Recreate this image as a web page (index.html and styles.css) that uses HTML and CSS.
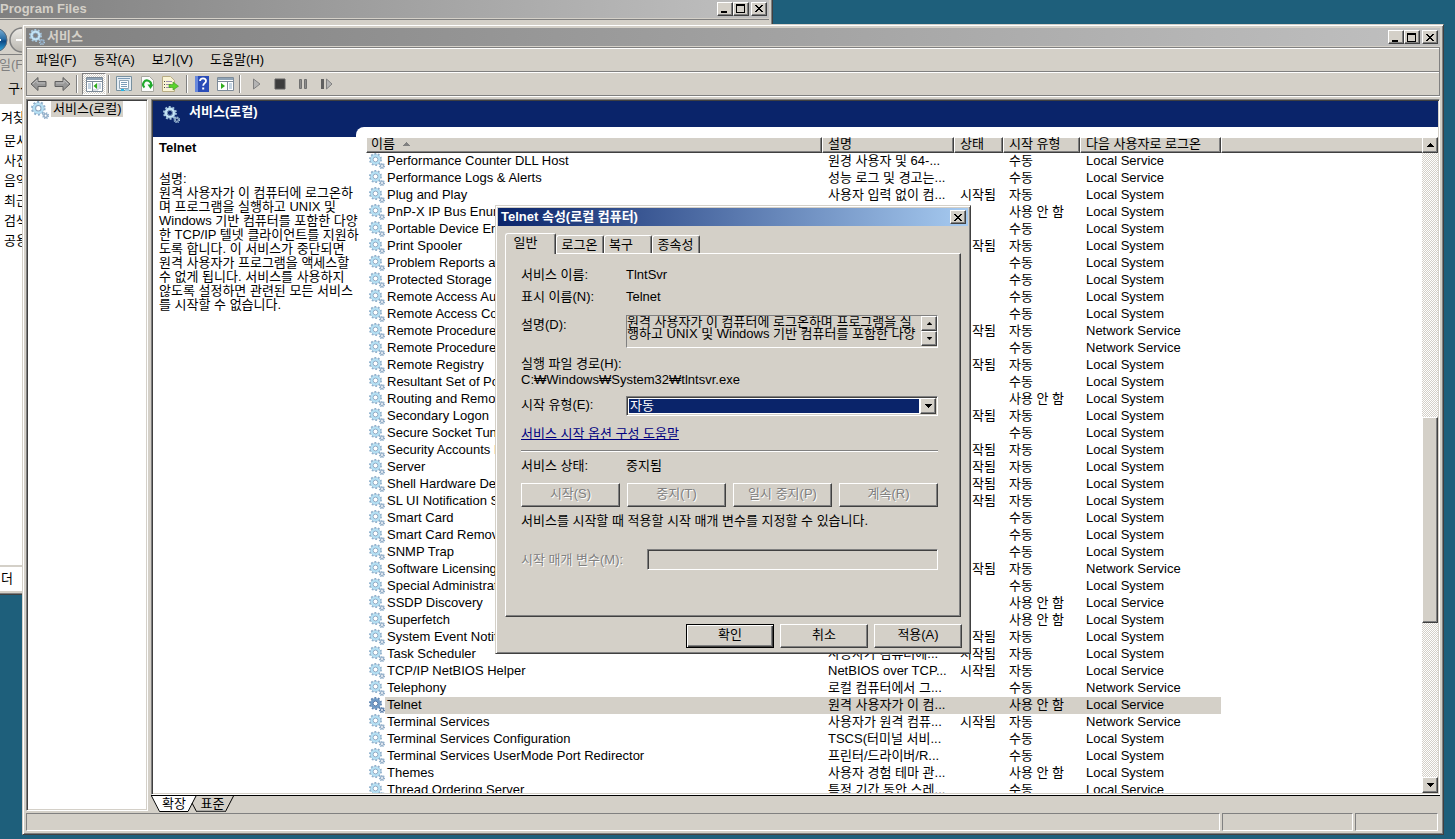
FILE: index.html
```html
<!DOCTYPE html>
<html lang="ko">
<head>
<meta charset="utf-8">
<title>서비스</title>
<link rel="stylesheet" href="styles.css">
</head>
<body>
<svg class="sprite" aria-hidden="true">
  <symbol id="gear" viewBox="0 0 16 16">
    <circle cx="6.5" cy="6.5" r="5.6" fill="none" stroke="var(--tooth, #8fb0cc)" stroke-width="1.8" stroke-dasharray="1.8 1.72"/>
    <circle cx="6.5" cy="6.5" r="4.9" fill="none" stroke="var(--tooth, #8fb0cc)" stroke-width="0.8"/>
    <circle cx="6.5" cy="6.5" r="3.7" fill="none" stroke="var(--ring, #b4e0f4)" stroke-width="2.2"/>
    <circle cx="6.5" cy="6.5" r="2.4" fill="none" stroke="var(--rim, #86a0bc)" stroke-width="0.9"/>
    <circle cx="13" cy="13" r="2.4" fill="none" stroke="var(--tooth, #8fb0cc)" stroke-width="1.4" stroke-dasharray="1.1 0.8"/>
    <circle cx="13" cy="13" r="1.5" fill="none" stroke="var(--small, #90aac4)" stroke-width="1.2"/>
  </symbol>
  <symbol id="up" viewBox="0 0 7 4"><path d="M3 0h1v1h1v1h1v1h1v1H0V3h1V2h1V1h1z"/></symbol>
  <symbol id="down" viewBox="0 0 7 4"><path d="M0 0h7v1H6v1H5v1H4v1H3V3H2V2H1V1H0z"/></symbol>
  <symbol id="min" viewBox="0 0 10 9"><path d="M1 7h6v2H1z"/></symbol>
  <symbol id="max" viewBox="0 0 10 9"><path d="M0 0h9v9H0zM1 2v6h7V2z" fill-rule="evenodd"/></symbol>
  <symbol id="close" viewBox="0 0 8 7"><path d="M0 0h2v1h1v1h2V1h1V0h2v1H7v1H6v1H5v1h1v1h1v1h1v1H6V6H5V5H3v1H2v1H0V6h1V5h1V4h1V3H2V2H1V1H0z"/></symbol>
</svg>

<section class="window explorer">
  <header class="titlebar inactive">
    <span class="caption">Program Files</span>
    <span class="controls">
      <button class="cap" aria-label="최소화"><svg width="10" height="9"><use href="#min"/></svg></button>
      <button class="cap" aria-label="최대화"><svg width="10" height="9"><use href="#max"/></svg></button>
      <button class="cap apart" aria-label="닫기"><svg width="8" height="7"><use href="#close"/></svg></button>
    </span>
  </header>
  <div class="explorer-nav">
    <svg width="34" height="28" viewBox="0 0 34 28">
      <defs>
        <linearGradient id="orb" x1="0" y1="0" x2="0" y2="1"><stop offset="0" stop-color="#7fb4d8"/><stop offset=".45" stop-color="#2a6ea6"/><stop offset=".55" stop-color="#0c4a86"/><stop offset="1" stop-color="#36b2e6"/></linearGradient>
        <linearGradient id="orb2" x1="0" y1="0" x2="0" y2="1"><stop offset="0" stop-color="#eceae6"/><stop offset="1" stop-color="#b8b5ae"/></linearGradient>
      </defs>
      <circle cx="-4" cy="14" r="12" fill="url(#orb)" stroke="#5b6b7b"/>
      <circle cx="23" cy="14" r="12" fill="url(#orb2)" stroke="#808080" stroke-width="1.5"/>
      <path d="M0 13h2v2H0z" fill="#fff"/><path d="M17 13h8v2h-8z" fill="#fff"/>
    </svg>
  </div>
  <div class="explorer-menu">일(F)</div>
  <div class="explorer-bar">구성</div>
  <div class="explorer-side">
    <b>겨찾기</b>
    <a href="#">문서</a><a href="#">사진</a><a href="#">음악</a><a href="#">최근</a><a href="#">검색</a><a href="#">공용</a>
  </div>
  <div class="explorer-status">더</div>
</section>

<main class="window services">
  <header class="titlebar inactive">
    <svg class="title-icon" width="16" height="16"><use href="#gear"/></svg>
    <span class="caption">서비스</span>
    <span class="controls">
      <button class="cap" aria-label="최소화"><svg width="10" height="9"><use href="#min"/></svg></button>
      <button class="cap" aria-label="최대화"><svg width="10" height="9"><use href="#max"/></svg></button>
      <button class="cap apart" aria-label="닫기"><svg width="8" height="7"><use href="#close"/></svg></button>
    </span>
  </header>

  <div class="bars">
    <nav class="menubar">
      <button>파일(F)</button><button>동작(A)</button><button>보기(V)</button><button>도움말(H)</button>
    </nav>
    <div class="toolbar">
      <button aria-label="뒤로"><svg width="18" height="16" viewBox="0 0 18 16"><path d="M1 8l7-6.500v4h8v5H8v4z" fill="#989898" stroke="#606060"/><path d="M3 8l4-4v3h8" fill="none" stroke="#bcbcbc"/></svg></button>
      <button aria-label="앞으로"><svg width="18" height="16" viewBox="0 0 18 16"><path d="M17 8l-7-6.500v4H2v5h8v4z" fill="#989898" stroke="#606060"/><path d="M15 8l-4-4v3H3" fill="none" stroke="#bcbcbc"/></svg></button>
      <i class="sep"></i>
      <button class="pressed" aria-label="콘솔 트리 표시"><svg width="17" height="15" viewBox="0 0 17 15"><path d="M.5.5h16v14H.5z" fill="#fff" stroke="#7d8b99"/><path d="M1 1h15v2H1z" fill="#8fa3b5"/><path d="M1 4h15v1H1zM6 5h1v9H6z" fill="#7d8b99"/><path d="M2 7h3M2 9h3M2 11h3M13 7h2M13 9h2M13 11h2" stroke="#8aa9c4"/><path d="M12 6v7M7 13h5" stroke="#b7c2cc"/><path d="M11 6v6L7.500 9z" fill="#2fae1c"/></svg></button>
      <i class="sep"></i>
      <button aria-label="속성"><svg width="16" height="16" viewBox="0 0 16 16"><path d="M.5.500h15v14H.5z" fill="#e6eef4" stroke="#78909f"/><path d="M3.500 4.500h9v8h-9z" fill="#fff" stroke="#90a4b4"/><path d="M5 6.500h6M5 8.500h6M5 10.500h6M2 2.500h12" stroke="#7c9cb8"/><path d="M5 13h3v2H5z" fill="#22b8e8"/><path d="M9 13h4v2H9z" fill="#9cc8dc"/></svg></button>
      <button aria-label="새로 고침"><svg width="14" height="16" viewBox="0 0 14 16"><path d="M1.500.5h8l4 4v11h-12z" fill="#fcfcfc" stroke="#a8a8a0"/><path d="M4.500 11.500a4 4 0 1 1 6.500-2" fill="none" stroke="#20a82c" stroke-width="2"/><path d="M7.500 8.500h6l-3 4.500z" fill="#20a82c"/></svg></button>
      <button aria-label="목록 내보내기"><svg width="17" height="16" viewBox="0 0 17 16"><path d="M.5.5h8l4 4v11H.5z" fill="#faf4d4" stroke="#b8ac84"/><path d="M2 5.500h1M2 8.500h1M2 11.500h1" stroke="#444"/><path d="M4 5.500h6M4 8.500h5M4 11.500h5" stroke="#9a8fae"/><path d="M7 8.500h4V6l5.500 4.200L11 14v-2.500H7z" fill="#5bd22c" stroke="#3a9a1c" stroke-width=".6"/></svg></button>
      <i class="sep before-group"></i>
      <button aria-label="도움말"><svg width="14" height="16" viewBox="0 0 14 16"><path d="M0 0h14v16H0z" fill="#2a4cb8"/><path d="M0 0h3v16H0z" fill="#6888dc"/><path d="M5 5c0-3.500 6-3.500 6 0 0 2.200-2.800 2.200-2.800 4.800" fill="none" stroke="#fff" stroke-width="1.800"/><path d="M7.200 11.500h2v2h-2z" fill="#fff"/></svg></button>
      <button aria-label="작업창 표시"><svg width="17" height="14" viewBox="0 0 17 14"><path d="M.5.500h16v13H.5z" fill="#fff" stroke="#7d8b99"/><path d="M1 1h15v2H1z" fill="#8fa3b5"/><path d="M1 4h15v1H1zM10 5h1v8h-1z" fill="#7d8b99"/><path d="M12 7h3M12 9h3M12 11h3" stroke="#8aa9c4"/><path d="M4 6v6l4-3z" fill="#2fae1c"/></svg></button>
      <i class="sep after-group"></i>
      <button aria-label="시작"><svg width="10" height="12" viewBox="0 0 10 12"><path d="M1.500 1l6.500 5-6.500 5z" fill="#b4b4b4" stroke="#808080"/></svg></button>
      <button aria-label="중지"><svg width="12" height="12" viewBox="0 0 12 12"><path d="M1 1h10v10H1z" fill="#3c3c3c" stroke="#606060"/></svg></button>
      <button aria-label="일시 중지"><svg width="10" height="12" viewBox="0 0 10 12"><path d="M1.500 1.500h2v9h-2zM6.500 1.500h2v9h-2z" fill="#8c8c8c" stroke="#707070"/></svg></button>
      <button aria-label="다시 시작"><svg width="13" height="12" viewBox="0 0 13 12"><path d="M1 1h3v10H1z" fill="#606060"/><path d="M6.500 1l5.500 5-5.500 5z" fill="#b4b4b4" stroke="#808080"/></svg></button>
    </div>
  </div>

  <div class="panes">
    <aside class="tree sunken">
      <svg width="18" height="18"><use href="#gear"/></svg>
      <span class="tree-label">서비스(로컬)</span>
    </aside>
    <section class="content">
      <div class="view sunken">
        <div class="band">
          <svg class="band-icon" width="17" height="17"><use href="#gear"/></svg>
          <h1>서비스(로컬)</h1>
        </div>
        <div class="columns">
          <div class="details">
            <h2>Telnet</h2>
            <p>설명:<br>원격 사용자가 이 컴퓨터에 로그온하<br>며 프로그램을 실행하고 UNIX 및<br>Windows 기반 컴퓨터를 포함한 다양<br>한 TCP/IP 텔넷 클라이언트를 지원하<br>도록 합니다. 이 서비스가 중단되면<br>원격 사용자가 프로그램을 액세스할<br>수 없게 됩니다. 서비스를 사용하지<br>않도록 설정하면 관련된 모든 서비스<br>를 시작할 수 없습니다.</p>
          </div>
          <div class="list">
            <div class="list-view">
              <table>
                <colgroup><col class="c-name"><col class="c-desc"><col class="c-state"><col class="c-start"><col class="c-logon"><col></colgroup>
                <thead><tr><th>이름 <svg class="sort" width="7" height="4"><use href="#up"/></svg></th><th>설명</th><th>상태</th><th>시작 유형</th><th>다음 사용자로 로그온</th><th></th></tr></thead>
                <tbody id="rows"></tbody>
              </table>
            </div>
            <div class="scrollbar">
              <button class="arrow" aria-label="위로"><svg width="7" height="4"><use href="#up"/></svg></button>
              <span class="before"></span><span class="thumb"></span><span class="after"></span>
              <button class="arrow" aria-label="아래로"><svg width="7" height="4"><use href="#down"/></svg></button>
            </div>
          </div>
        </div>
      </div>
      <div class="view-tabs">
        <button class="view-tab first"><svg width="46" height="16" viewBox="0 0 46 16"><path d="M0 0l8 15.500h29L45 0z" fill="#fff"/><path d="M.5 0l8 15.500h28.500L45 0" fill="none" stroke="#000"/></svg><span>확장</span></button>
        <button class="view-tab"><svg width="43" height="16" viewBox="0 0 43 16"><path d="M1 7l4.500 8.500H34.500L42.500 0" fill="none" stroke="#000"/><path d="M6 15h28" stroke="#808080"/></svg><span>표준</span></button>
      </div>
    </section>
  </div>
  <footer class="status"><span></span><span></span><span></span></footer>
</main>

<section class="window dialog" role="dialog" aria-labelledby="dlg-title">
  <header class="titlebar">
    <span class="caption" id="dlg-title">Telnet 속성(로컬 컴퓨터)</span>
    <span class="controls"><button class="cap" aria-label="닫기"><svg width="8" height="7"><use href="#close"/></svg></button></span>
  </header>
  <div class="tabs">
    <button class="tab active">일반</button><button class="tab">로그온</button><button class="tab">복구</button><button class="tab">종속성</button>
  </div>
  <form class="panel">
    <div class="field"><span class="label">서비스 이름:</span><span>TlntSvr</span></div>
    <div class="field near"><span class="label">표시 이름(N):</span><span>Telnet</span></div>
    <div class="field desc">
      <label class="label" for="desc">설명(D):</label>
      <div class="memo">
        <textarea id="desc" readonly>원격 사용자가 이 컴퓨터에 로그온하며 프로그램을 실
행하고 UNIX 및 Windows 기반 컴퓨터를 포함한 다양</textarea>
        <div class="memo-scroll">
          <button type="button" class="arrow" aria-label="위로"><svg width="5" height="3"><use href="#up"/></svg></button>
          <button type="button" class="arrow" aria-label="아래로"><svg width="5" height="3"><use href="#down"/></svg></button>
        </div>
      </div>
    </div>
    <div class="path">실행 파일 경로(H):<br>C:₩Windows₩System32₩tlntsvr.exe</div>
    <div class="field start">
      <label class="label" for="start">시작 유형(E):</label>
      <div class="combo">
        <select id="start"><option>자동</option></select>
        <span class="arrow"><svg width="7" height="4"><use href="#down"/></svg></span>
      </div>
    </div>
    <a class="help" href="#">서비스 시작 옵션 구성 도움말</a>
    <hr>
    <div class="field near"><span class="label">서비스 상태:</span><span>중지됨</span></div>
    <div class="actions">
      <button type="button" class="btn" disabled>시작(S)</button><button type="button" class="btn" disabled>중지(T)</button><button type="button" class="btn" disabled>일시 중지(P)</button><button type="button" class="btn" disabled>계속(R)</button>
    </div>
    <p class="hint">서비스를 시작할 때 적용할 시작 매개 변수를 지정할 수 있습니다.</p>
    <div class="params"><label for="params">시작 매개 변수(M):</label><input id="params" type="text" disabled></div>
  </form>
  <footer class="dialog-buttons">
    <button class="btn default">확인</button><button class="btn">취소</button><button class="btn">적용(A)</button>
  </footer>
</section>
<script src="app.js"></script>
</body>
</html>
```

FILE: styles.css
```css
* { box-sizing: border-box; }

:root {
  --face: #d4d0c8;
  --shade: #808080;
  --dark: #404040;
  --navy: #0a246a;
}

html, body { height: 100%; }

body {
  margin: 0;
  position: relative;
  overflow: hidden;
  background: #1e5f7b;
  color: #000;
  font: 13px/16px "Liberation Sans", "Noto Sans CJK KR", sans-serif;
}

button, input, select, textarea { font: inherit; color: inherit; }

button {
  margin: 0;
  padding: 0;
  border: 0;
  background: none;
  white-space: nowrap;
}

svg { display: block; }
.sprite { position: absolute; width: 0; height: 0; }

/* windows */
.window {
  position: absolute;
  display: flex;
  flex-direction: column;
  padding: 3px;
  background: var(--face);
  border: 1px solid;
  border-color: var(--face) var(--dark) var(--dark) var(--face);
  box-shadow: inset 1px 1px #fff, inset -1px -1px var(--shade);
}

.titlebar {
  display: flex;
  align-items: center;
  flex: none;
  height: 18px;
  padding: 0 2px 0 3px;
  color: #fff;
  font-weight: bold;
  background: linear-gradient(90deg, #0a246a, #a6caf0);
}
.titlebar.inactive {
  color: var(--face);
  background: linear-gradient(90deg, #808080, #c0c0c0);
}
.title-icon { margin-right: 2px; --ring: #c4e4f6; --tooth: #a8c8e0; }
.caption { flex: 1; white-space: nowrap; }
.controls { display: flex; }

.cap, .arrow {
  display: flex;
  align-items: center;
  justify-content: center;
  width: 16px;
  height: 14px;
  background: var(--face);
  border: 1px solid;
  border-color: #fff var(--dark) var(--dark) #fff;
  box-shadow: inset -1px -1px var(--shade);
}
.cap.apart { margin-left: 2px; }
.arrow { height: 16px; flex: none; }

/* explorer window behind */
.explorer {
  left: -5px;
  top: -5px;
  width: 778px;
  height: 600px;
}
.explorer .titlebar { height: 19px; padding-left: 1px; }
.explorer-nav {
  height: 36px;
  margin-top: 1px;
  padding-top: 6px;
  border-top: 1px solid var(--shade);
  border-bottom: 1px solid var(--shade);
}
.explorer-menu { height: 20px; padding: 2px 0; color: var(--shade); }
.explorer-bar { height: 29px; padding: 6px 0 0 9px; }
.explorer-side {
  display: flex;
  flex-direction: column;
  gap: 4px;
  flex: 1;
  padding-top: 6px;
  background: #fff;
}
.explorer-side b { font-weight: normal; padding-left: 2px; margin-bottom: 3px; }
.explorer-side a { color: #000; text-decoration: none; padding-left: 5px; }
.explorer-status {
  height: 26px;
  padding: 4px 2px;
  border-top: 2px solid var(--face);
  background: #fff;
}

/* services window */
.services { left: 22px; top: 24px; right: 11px; bottom: 4px; }

.bars {
  flex: none;
  margin-top: 1px;
  border: 1px solid var(--shade);
  box-shadow: 0 1px #fff;
}
.menubar {
  display: flex;
  gap: 17px;
  height: 24px;
  padding: 0 9px;
  border-top: 1px solid #fff;
  border-bottom: 1px solid var(--shade);
}
.toolbar {
  display: flex;
  align-items: center;
  height: 23px;
  padding-left: 3px;
  gap: 5px;
  border-top: 1px solid #fff;
}
.toolbar button { display: flex; align-items: center; justify-content: center; min-width: 18px; height: 20px; }
.toolbar .pressed {
  width: 24px;
  height: 22px;
  margin: 0 -3px 0 -1px;
  border: 1px solid;
  border-color: var(--shade) #fff #fff var(--shade);
  background: repeating-conic-gradient(#fff 0 25%, var(--face) 0 50%) 0 0 / 2px 2px;
}
.sep { width: 2px; height: 18px; border-left: 1px solid var(--shade); border-right: 1px solid #fff; }
.before-group { margin-left: 2px; }
.after-group { margin-right: 2px; }

.panes { display: flex; flex: 1; gap: 3px; min-height: 0; margin-top: 3px; }

.sunken {
  border: 1px solid;
  border-color: var(--shade) #fff #fff var(--shade);
  box-shadow: inset 1px 1px var(--dark), inset -1px -1px var(--face);
  background: #fff;
}
.tree { display: flex; align-items: flex-start; width: 122px; padding: 1px 0 0 4px; gap: 2px; }
.tree-label { padding: 0 2px; background: var(--face); white-space: nowrap; }

.content { display: flex; flex-direction: column; flex: 1; min-width: 0; }
.view {
  display: flex;
  flex-direction: column;
  flex: 1;
  min-height: 0;
  padding: 1px;
}
.band {
  display: flex;
  flex: none;
  gap: 9px;
  height: 26px;
  padding: 3px 10px 0;
  background: var(--navy);
  color: #fff;
}
.band-icon { margin-top: 2px; --ring: #c4e4f6; --tooth: #a8c8e0; }
.band h1 { margin: 0; font-size: 13px; line-height: 16px; }
.columns { display: flex; flex: 1; min-height: 0; background: var(--navy); }
.details {
  position: relative;
  z-index: 1;
  width: 203px;
  margin-top: 10px;
  padding: 3px 6px;
  background: #fff;
  white-space: nowrap;
}
.details h2 { margin: 0 0 16px; font-size: 13px; line-height: 16px; }
.details p { margin: 0; line-height: 14px; }

.list {
  display: flex;
  flex: 1;
  min-width: 0;
  padding: 10px 0 0 10px;
  background: #fff;
  border-top-left-radius: 8px;
}
.list-view { flex: 1; min-width: 0; overflow: hidden; }
.list table { width: 100%; table-layout: fixed; border-collapse: separate; border-spacing: 0; }
.c-name { width: 456px; }
.c-desc { width: 132px; }
.c-state { width: 49px; }
.c-start { width: 77px; }
.c-logon { width: 141px; }
.list th {
  height: 16px;
  padding: 0 5px 2px;
  text-align: left;
  font-weight: normal;
  line-height: 12px;
  white-space: nowrap;
  background: var(--face);
  border: 1px solid;
  border-color: #fff var(--dark) var(--dark) #fff;
  box-shadow: inset -1px -1px var(--shade);
}
.list th:first-child { padding-left: 4px; }
.list th:last-child { border-right: 0; box-shadow: inset 0 -1px var(--shade); }
.sort { display: inline-block; margin: 0 0 2px 4px; fill: var(--shade); }
.list td { height: 17px; padding: 0 6px; line-height: 16px; vertical-align: top; white-space: nowrap; overflow: hidden; }
.list td:first-child { padding: 0 0 0 3px; }
.name { display: flex; height: 17px; }
.name span { flex: 1; padding-left: 2px; }
.selected td:not(:first-child):not(:last-child), .selected .name span { background: var(--face); }
.selected { --ring: #6f9cc8; --tooth: #5f84b0; --rim: #4a6c9c; --small: #5878a4; }

.scrollbar {
  display: flex;
  flex-direction: column;
  width: 16px;
  background: repeating-conic-gradient(#fff 0 25%, var(--face) 0 50%) 0 0 / 2px 2px;
}
.before { flex: 265; }
.after { flex: 155; }
.thumb {
  flex: 204;
  background: var(--face);
  border: 1px solid;
  border-color: #fff var(--dark) var(--dark) #fff;
  box-shadow: inset -1px -1px var(--shade);
}

.view-tabs { display: flex; flex: none; height: 16px; border-top: 1px solid #000; }
.view-tab { position: relative; width: 43px; height: 15px; line-height: 14px; }
.view-tab.first { width: 40px; padding-left: 6px; }
.view-tab svg { position: absolute; left: 0; top: 0; }
.view-tab span { position: relative; }

.status { display: flex; flex: none; gap: 2px; height: 18px; margin: 2px 2px 0 0; }
.status span { flex: 1; border: 1px solid; border-color: var(--shade) #fff #fff var(--shade); }
.status span:nth-child(2) { flex: none; width: 131px; }
.status span:nth-child(3) { flex: none; width: 83px; }

/* properties dialog */
.dialog { left: 495px; top: 205px; width: 476px; padding: 2px; }
.tabs { display: flex; align-items: flex-end; margin: 7px 7px 0; height: 20px; }
.tab {
  height: 18px;
  width: 48px;
  padding-right: 1px;
  border: 1px solid;
  border-color: #fff var(--dark) transparent #fff;
  border-bottom: 0;
  border-radius: 3px 2px 0 0;
  box-shadow: inset -1px 0 var(--shade);
}
.tab:nth-child(3) { padding-right: 14px; }
.tab.active {
  position: relative;
  width: 51px;
  height: 21px;
  margin-bottom: -1px;
  padding: 0 10px 3px 0;
  background: var(--face);
}
.panel {
  display: flex;
  flex-direction: column;
  margin: 0 7px;
  padding: 13px 22px 46px 15px;
  border: 1px solid;
  border-color: #fff var(--dark) var(--dark) #fff;
  box-shadow: inset -1px -1px var(--shade);
}
.field { display: flex; }
.near { margin-top: 6px; }
.label { width: 105px; flex: none; }
.desc { margin-top: 10px; }
.desc .label { padding-top: 2px; }
.memo {
  display: flex;
  flex: 1;
  height: 33px;
  border: 1px solid;
  border-color: var(--shade) #fff #fff var(--shade);
}
.memo textarea {
  flex: 1;
  min-width: 0;
  padding: 0;
  border: 0;
  background: none;
  resize: none;
  overflow: hidden;
  line-height: 12px;
  white-space: pre;
}
.memo-scroll .arrow { height: 15px; }
.path { margin-top: 8px; }
.start { margin-top: 8px; }
.start .label { padding-top: 1px; }
.combo {
  display: flex;
  flex: 1;
  height: 20px;
  padding: 1px;
  border: 1px solid;
  border-color: var(--shade) #fff #fff var(--shade);
  background: #fff;
  box-shadow: inset 1px 1px var(--dark), inset -1px -1px var(--face);
}
.combo select {
  appearance: none;
  flex: 1;
  margin: 1px;
  padding: 0 1px;
  border: 0;
  border-radius: 0;
  line-height: 14px;
  background: var(--navy);
  color: #fff;
}
.help { align-self: flex-start; margin-top: 10px; color: #000080; }
hr { width: 100%; height: 2px; margin: 8px 0 0; border: 0; border-top: 1px solid var(--shade); border-bottom: 1px solid #fff; }
.actions { display: flex; gap: 7px; margin-top: 9px; }
.btn {
  height: 24px;
  padding-bottom: 3px;
  background: var(--face);
  border: 1px solid;
  border-color: #fff var(--dark) var(--dark) #fff;
  box-shadow: inset -1px -1px var(--shade);
}
.actions .btn { flex: 1; }
.btn:disabled, .params label { color: var(--shade); text-shadow: 1px 1px #fff; }
.hint { margin: 6px 0 0; white-space: nowrap; }
.params { display: flex; align-items: center; margin-top: 20px; }
.params label { width: 126px; flex: none; }
.params input {
  flex: 1;
  min-width: 0;
  height: 21px;
  border: 1px solid;
  border-color: var(--shade) #fff #fff var(--shade);
  box-shadow: inset 1px 1px var(--dark);
  background: var(--face);
}
.dialog-buttons { display: flex; justify-content: flex-end; gap: 6px; padding: 7px 6px 3px; }
.dialog-buttons .btn { width: 88px; }
.dialog-buttons .default { border-color: #000; box-shadow: inset 1px 1px #fff, inset -1px -1px var(--dark), inset -2px -2px var(--shade); }
```

FILE: app.js
```js
const S = "시작됨", A = "자동", M = "수동", D = "사용 안 함";
const LS = "Local Service", SY = "Local System", NS = "Network Service";
const services = [
  ["Performance Counter DLL Host", "원경 사용자 및 64-...", "", M, LS],
  ["Performance Logs & Alerts", "성능 로그 및 경고는...", "", M, LS],
  ["Plug and Play", "사용자 입력 없이 컴...", S, A, SY],
  ["PnP-X IP Bus Enumerator", "", "", D, SY],
  ["Portable Device Enumerator", "", "", M, SY],
  ["Print Spooler", "", S, A, SY],
  ["Problem Reports and", "", "", M, SY],
  ["Protected Storage", "", "", M, SY],
  ["Remote Access Auto", "", "", M, SY],
  ["Remote Access Connection", "", "", M, SY],
  ["Remote Procedure Call", "", S, A, NS],
  ["Remote Procedure Call", "", "", M, NS],
  ["Remote Registry", "", S, A, SY],
  ["Resultant Set of Policy", "", "", M, SY],
  ["Routing and Remote Access", "", "", D, SY],
  ["Secondary Logon", "", S, A, SY],
  ["Secure Socket Tunneling", "", "", M, SY],
  ["Security Accounts Manager", "", S, A, SY],
  ["Server", "", S, A, SY],
  ["Shell Hardware Detection", "", S, A, SY],
  ["SL UI Notification Service", "", S, A, SY],
  ["Smart Card", "", "", M, SY],
  ["Smart Card Removal Policy", "", "", M, SY],
  ["SNMP Trap", "", "", M, SY],
  ["Software Licensing", "", S, A, NS],
  ["Special Administration", "", "", M, SY],
  ["SSDP Discovery", "", "", D, LS],
  ["Superfetch", "", "", D, SY],
  ["System Event Notification", "", S, A, SY],
  ["Task Scheduler", "사용자가 컴퓨터에...", S, A, SY],
  ["TCP/IP NetBIOS Helper", "NetBIOS over TCP...", S, A, LS],
  ["Telephony", "로컬 컴퓨터에서 그...", "", M, NS],
  ["Telnet", "원격 사용자가 이 컴...", "", D, LS],
  ["Terminal Services", "사용자가 원격 컴퓨...", S, A, NS],
  ["Terminal Services Configuration", "TSCS(터미널 서비...", "", M, SY],
  ["Terminal Services UserMode Port Redirector", "프린터/드라이버/R...", "", M, SY],
  ["Themes", "사용자 경험 테마 관...", "", D, SY],
  ["Thread Ordering Server", "특정 기간 동안 스레...", "", M, LS]
];

const body = document.getElementById("rows");
for (const [name, ...rest] of services) {
  const row = body.insertRow();
  if (name === "Telnet") row.className = "selected";
  const cell = row.insertCell();
  cell.innerHTML = '<div class="name"><svg width="16" height="16"><use href="#gear"/></svg><span></span></div>';
  cell.querySelector("span").textContent = name;
  for (const text of rest) row.insertCell().textContent = text;
  row.insertCell();
}
```
